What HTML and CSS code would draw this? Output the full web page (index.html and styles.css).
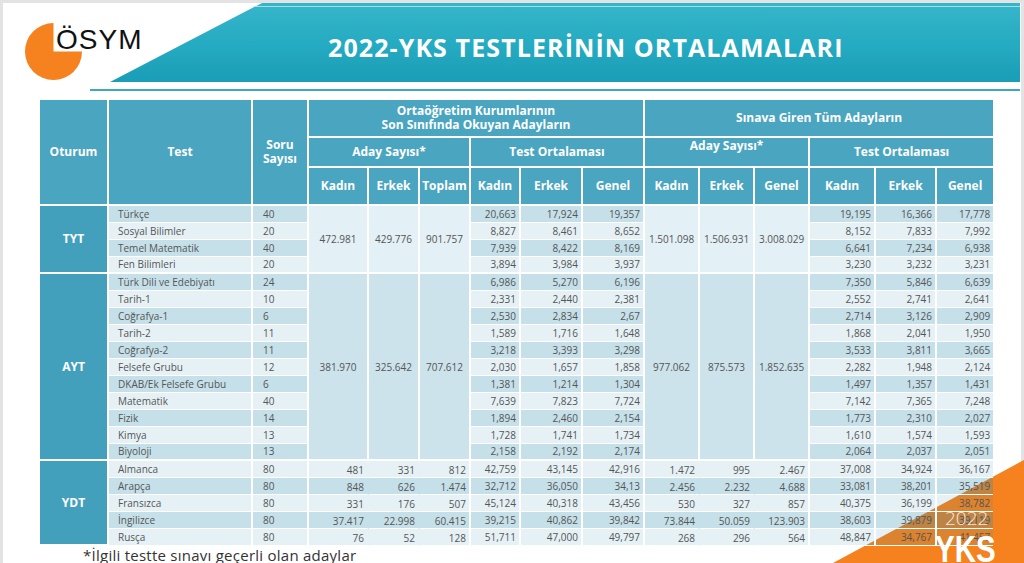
FILE: index.html
```html
<!DOCTYPE html>
<html lang="tr">
<head>
<meta charset="utf-8">
<title>2022-YKS Testlerinin Ortalamaları</title>
<link rel="stylesheet" href="styles.css">
</head>
<body>
<div class="slide">
  <header class="banner">
    <div class="logo">
      <svg class="logo-mark" width="57" height="57" viewBox="0 0 57 57" aria-hidden="true"><path d="M28.5 28.5 L28.5 0 A28.5 28.5 0 1 0 57 28.5 Z" fill="#f5821f"/></svg>
      <span class="logo-text">ÖSYM</span>
    </div>
    <div class="band"><h1>2022-YKS TESTLERİNİN ORTALAMALARI</h1></div>
  </header>
  <div class="rule"></div>
  <table class="grid">
    <colgroup>
      <col class="c69"><col class="c144"><col class="c56">
      <col class="c60"><col class="c51"><col class="c51">
      <col class="c50"><col class="c62"><col class="c62">
      <col class="c55"><col class="c55"><col class="c55">
      <col class="c66"><col class="c61"><col class="c56">
    </colgroup>
    <thead>
      <tr class="h1">
        <th rowspan="3">Oturum</th>
        <th rowspan="3">Test</th>
        <th rowspan="3" class="two">Soru<br>Sayısı</th>
        <th colspan="6" class="two">Ortaöğretim Kurumlarının<br>Son Sınıfında Okuyan Adayların</th>
        <th colspan="6">Sınava Giren Tüm Adayların</th>
      </tr>
      <tr class="h2">
        <th colspan="3">Aday Sayısı*</th>
        <th colspan="3">Test Ortalaması</th>
        <th colspan="3" class="top">Aday Sayısı*</th>
        <th colspan="3">Test Ortalaması</th>
      </tr>
      <tr class="h3">
        <th>Kadın</th><th>Erkek</th><th>Toplam</th>
        <th>Kadın</th><th>Erkek</th><th>Genel</th>
        <th>Kadın</th><th>Erkek</th><th>Genel</th>
        <th>Kadın</th><th>Erkek</th><th>Genel</th>
      </tr>
    </thead>
    <tbody>
      <tr class="d">
        <td class="o" rowspan="4">TYT</td>
        <td class="t">Türkçe</td><td class="s">40</td>
        <td class="m lite" rowspan="4">472.981</td><td class="m lite" rowspan="4">429.776</td><td class="m lite" rowspan="4">901.757</td>
        <td class="n">20,663</td><td class="n">17,924</td><td class="n">19,357</td>
        <td class="m lite" rowspan="4">1.501.098</td><td class="m lite" rowspan="4">1.506.931</td><td class="m lite" rowspan="4">3.008.029</td>
        <td class="n">19,195</td><td class="n">16,366</td><td class="n">17,778</td>
      </tr>
      <tr class="l">
        <td class="t">Sosyal Bilimler</td><td class="s">20</td>
        <td class="n">8,827</td><td class="n">8,461</td><td class="n">8,652</td>
        <td class="n">8,152</td><td class="n">7,833</td><td class="n">7,992</td>
      </tr>
      <tr class="d">
        <td class="t">Temel Matematik</td><td class="s">40</td>
        <td class="n">7,939</td><td class="n">8,422</td><td class="n">8,169</td>
        <td class="n">6,641</td><td class="n">7,234</td><td class="n">6,938</td>
      </tr>
      <tr class="l end">
        <td class="t">Fen Bilimleri</td><td class="s">20</td>
        <td class="n">3,894</td><td class="n">3,984</td><td class="n">3,937</td>
        <td class="n">3,230</td><td class="n">3,232</td><td class="n">3,231</td>
      </tr>

      <tr class="d">
        <td class="o" rowspan="11">AYT</td>
        <td class="t">Türk Dili ve Edebiyatı</td><td class="s">24</td>
        <td class="m deep" rowspan="11">381.970</td><td class="m deep" rowspan="11">325.642</td><td class="m deep" rowspan="11">707.612</td>
        <td class="n">6,986</td><td class="n">5,270</td><td class="n">6,196</td>
        <td class="m deep" rowspan="11">977.062</td><td class="m deep" rowspan="11">875.573</td><td class="m deep" rowspan="11">1.852.635</td>
        <td class="n">7,350</td><td class="n">5,846</td><td class="n">6,639</td>
      </tr>
      <tr class="l">
        <td class="t">Tarih-1</td><td class="s">10</td>
        <td class="n">2,331</td><td class="n">2,440</td><td class="n">2,381</td>
        <td class="n">2,552</td><td class="n">2,741</td><td class="n">2,641</td>
      </tr>
      <tr class="d">
        <td class="t">Coğrafya-1</td><td class="s">6</td>
        <td class="n">2,530</td><td class="n">2,834</td><td class="n">2,67</td>
        <td class="n">2,714</td><td class="n">3,126</td><td class="n">2,909</td>
      </tr>
      <tr class="l">
        <td class="t">Tarih-2</td><td class="s">11</td>
        <td class="n">1,589</td><td class="n">1,716</td><td class="n">1,648</td>
        <td class="n">1,868</td><td class="n">2,041</td><td class="n">1,950</td>
      </tr>
      <tr class="d">
        <td class="t">Coğrafya-2</td><td class="s">11</td>
        <td class="n">3,218</td><td class="n">3,393</td><td class="n">3,298</td>
        <td class="n">3,533</td><td class="n">3,811</td><td class="n">3,665</td>
      </tr>
      <tr class="l">
        <td class="t">Felsefe Grubu</td><td class="s">12</td>
        <td class="n">2,030</td><td class="n">1,657</td><td class="n">1,858</td>
        <td class="n">2,282</td><td class="n">1,948</td><td class="n">2,124</td>
      </tr>
      <tr class="d">
        <td class="t">DKAB/Ek Felsefe Grubu</td><td class="s">6</td>
        <td class="n">1,381</td><td class="n">1,214</td><td class="n">1,304</td>
        <td class="n">1,497</td><td class="n">1,357</td><td class="n">1,431</td>
      </tr>
      <tr class="l">
        <td class="t">Matematik</td><td class="s">40</td>
        <td class="n">7,639</td><td class="n">7,823</td><td class="n">7,724</td>
        <td class="n">7,142</td><td class="n">7,365</td><td class="n">7,248</td>
      </tr>
      <tr class="d">
        <td class="t">Fizik</td><td class="s">14</td>
        <td class="n">1,894</td><td class="n">2,460</td><td class="n">2,154</td>
        <td class="n">1,773</td><td class="n">2,310</td><td class="n">2,027</td>
      </tr>
      <tr class="l">
        <td class="t">Kimya</td><td class="s">13</td>
        <td class="n">1,728</td><td class="n">1,741</td><td class="n">1,734</td>
        <td class="n">1,610</td><td class="n">1,574</td><td class="n">1,593</td>
      </tr>
      <tr class="d end">
        <td class="t">Biyoloji</td><td class="s">13</td>
        <td class="n">2,158</td><td class="n">2,192</td><td class="n">2,174</td>
        <td class="n">2,064</td><td class="n">2,037</td><td class="n">2,051</td>
      </tr>

      <tr class="l">
        <td class="o" rowspan="5">YDT</td>
        <td class="t">Almanca</td><td class="s">80</td>
        <td class="a open">481</td><td class="a open">331</td><td class="a">812</td>
        <td class="n">42,759</td><td class="n">43,145</td><td class="n">42,916</td>
        <td class="a open">1.472</td><td class="a open">995</td><td class="a">2.467</td>
        <td class="n">37,008</td><td class="n">34,924</td><td class="n">36,167</td>
      </tr>
      <tr class="d">
        <td class="t">Arapça</td><td class="s">80</td>
        <td class="a open">848</td><td class="a open">626</td><td class="a">1.474</td>
        <td class="n">32,712</td><td class="n">36,050</td><td class="n">34,13</td>
        <td class="a open">2.456</td><td class="a open">2.232</td><td class="a">4.688</td>
        <td class="n">33,081</td><td class="n">38,201</td><td class="n">35,519</td>
      </tr>
      <tr class="l">
        <td class="t">Fransızca</td><td class="s">80</td>
        <td class="a open">331</td><td class="a open">176</td><td class="a">507</td>
        <td class="n">45,124</td><td class="n">40,318</td><td class="n">43,456</td>
        <td class="a open">530</td><td class="a open">327</td><td class="a">857</td>
        <td class="n">40,375</td><td class="n">36,199</td><td class="n">38,782</td>
      </tr>
      <tr class="d">
        <td class="t">İngilizce</td><td class="s">80</td>
        <td class="a open">37.417</td><td class="a open">22.998</td><td class="a">60.415</td>
        <td class="n">39,215</td><td class="n">40,862</td><td class="n">39,842</td>
        <td class="a open">73.844</td><td class="a open">50.059</td><td class="a">123.903</td>
        <td class="n">38,603</td><td class="n">39,879</td><td class="n">39,119</td>
      </tr>
      <tr class="l">
        <td class="t">Rusça</td><td class="s">80</td>
        <td class="a open">76</td><td class="a open">52</td><td class="a">128</td>
        <td class="n">51,711</td><td class="n">47,000</td><td class="n">49,797</td>
        <td class="a open">268</td><td class="a open">296</td><td class="a">564</td>
        <td class="n">48,847</td><td class="n">34,767</td><td class="n">41,457</td>
      </tr>
    </tbody>
  </table>
  <p class="note">*İlgili testte sınavı geçerli olan adaylar</p>
</div>
<div class="corner" aria-hidden="true"></div>
<div class="yks-year">2022</div>
<div class="yks">YKS</div>
</body>
</html>
```

FILE: styles.css
```css
* { box-sizing: border-box; }

html, body {
  margin: 0;
  height: 100%;
}

body {
  background: #e3e3e3;
  overflow: hidden;
  font-family: "Open Sans", "DejaVu Sans", sans-serif;
}

.slide {
  margin: 3px 3px 0 3px;
  height: 560px;
  background: #fff;
}

/* ---------- banner ---------- */
.banner {
  display: grid;
  height: 79px;
}

.banner > * {
  grid-area: 1 / 1;
}

.logo {
  display: flex;
  align-items: flex-start;
  margin: 20px 0 0 22px;
}

.logo-mark {
  flex: none;
  display: block;
}

.logo-text {
  margin: 3px 0 0 -26px;
  font-family: "Liberation Sans", Arial, sans-serif;
  font-size: 28px;
  line-height: 28px;
  letter-spacing: 1px;
  color: #111;
}

.band {
  margin: 0 1px 0 107px;
  clip-path: polygon(152px 0, 100% 0, 100% 100%, 0 100%);
  background:
    linear-gradient(180deg, transparent 3px, #9fe0ea 3px, #9fe0ea 4px, transparent 4px),
    linear-gradient(180deg, #36b6ca 0%, #24aac1 55%, #1a9db6 100%);
  display: flex;
  align-items: center;
  padding: 8px 0 0 218px;
}

.band h1 {
  margin: 0;
  color: #fff;
  font-size: 25px;
  font-weight: 700;
  letter-spacing: 1.1px;
  white-space: nowrap;
}

.rule {
  height: 2px;
  margin: 7px 1px 0 87px;
  background: #3fa8bd;
}

/* ---------- table ---------- */
.grid {
  position: relative;
  z-index: 1;
  margin: 9px 0 0 37px;
  width: 953px;
  table-layout: fixed;
  border-collapse: separate;
  border-spacing: 0;
  color: #555;
}

.c69 { width: 69px; }
.c144 { width: 144px; }
.c56 { width: 56px; }
.c60 { width: 60px; }
.c51 { width: 51px; }
.c50 { width: 50px; }
.c62 { width: 62px; }
.c55 { width: 55px; }
.c66 { width: 66px; }
.c61 { width: 61px; }

.grid th {
  background: #4aa5c0;
  color: #fff;
  font-size: 12px;
  font-weight: 700;
  text-align: center;
  vertical-align: middle;
  border-right: 2px solid #fff;
  border-bottom: 2px solid #fff;
  padding: 0;
  white-space: nowrap;
}

.grid tr > :last-child {
  border-right: 0;
}

.h1 th {
  line-height: 14px;
  padding: 4px 0;
}

.h2 th {
  line-height: 16px;
  padding: 6px 0;
}

.h2 th.top {
  vertical-align: top;
  padding: 0 0 12px;
}

.h3 th {
  line-height: 16px;
  padding: 10px 0;
}

.grid td {
  font-size: 10px;
  line-height: 16px;
  padding: 0;
  border-right: 2px solid #fff;
  border-bottom: 1px solid #fff;
  white-space: nowrap;
  vertical-align: middle;
}

.grid tr.end td {
  line-height: 15px;
  border-bottom-width: 2px;
}

.grid td.o {
  background: #42a0bd;
  color: #fff;
  font-size: 12px;
  font-weight: 700;
  text-align: center;
  border-bottom-width: 2px;
}

tr.d td { background: rgba(40, 140, 175, 0.27); }
tr.l td { background: rgba(40, 140, 175, 0.12); }

.grid td.m {
  text-align: center;
  border-bottom-width: 2px;
}

.grid td.m.lite { background: rgba(40, 140, 175, 0.13); }
.grid td.m.deep { background: rgba(40, 140, 175, 0.24); }

.grid td.t { padding-left: 9px; text-align: left; }
.grid td.s { padding-left: 10px; text-align: left; }
.grid td.n { padding-right: 3px; text-align: right; }

.grid td.a {
  padding: 3px 3px 0 0;
  line-height: 13px;
  text-align: right;
}

.grid td.a.open {
  border-right-color: transparent;
}

/* ---------- footnote ---------- */
.note {
  margin: 0 0 0 80px;
  font-size: 15px;
  line-height: 18px;
  letter-spacing: 0.25px;
  color: #333;
  white-space: nowrap;
}

/* ---------- orange corner ---------- */
.corner {
  position: absolute;
  right: 0;
  bottom: 0;
  width: 191px;
  height: 103px;
  background: #f5821f;
  clip-path: polygon(100% 0, 100% 100%, 0 100%);
  z-index: 0;
}

.yks-year {
  position: absolute;
  left: 945px;
  top: 509px;
  z-index: 2;
  font-size: 19px;
  line-height: 19px;
  font-weight: 300;
  color: rgba(255, 255, 255, 0.85);
}

.yks {
  position: absolute;
  left: 935px;
  top: 532px;
  z-index: 2;
  font-family: "Liberation Sans", Arial, sans-serif;
  font-size: 36px;
  line-height: 36px;
  font-weight: 700;
  color: #fff;
  transform: scaleX(0.82);
  transform-origin: left top;
}
```
